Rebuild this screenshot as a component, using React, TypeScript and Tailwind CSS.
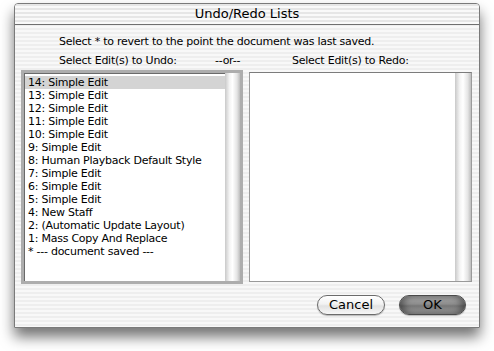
import React from "react";

const undoItems = [
  "14: Simple Edit",
  "13: Simple Edit",
  "12: Simple Edit",
  "11: Simple Edit",
  "10: Simple Edit",
  "9: Simple Edit",
  "8: Human Playback Default Style",
  "7: Simple Edit",
  "6: Simple Edit",
  "5: Simple Edit",
  "4: New Staff",
  "2: (Automatic Update Layout)",
  "1: Mass Copy And Replace",
  "* --- document saved ---",
];

const font = { fontFamily: '"DejaVu Sans", "Lucida Grande", sans-serif' };

export default function App() {
  return (
    <div className="w-[494px] h-[351px] bg-white pl-[14px] pt-[3px]" style={font}>
      <div className="w-[466px] h-[325px] flex flex-col border border-[#7a7a7a] rounded-t-[4px] overflow-hidden shadow-[0_9px_14px_rgba(0,0,0,0.55)] bg-[repeating-linear-gradient(180deg,#eeeeee_0px,#eeeeee_2px,#f8f8f8_2px,#f8f8f8_4px)]">
        <div className="h-[21px] shrink-0 flex items-center justify-center border-b border-[#6f6f6f] bg-[repeating-linear-gradient(180deg,#e6e6e6_0px,#e6e6e6_2px,#f9f9f9_2px,#f9f9f9_4px)] text-[13px] text-black">
          Undo/Redo Lists
        </div>
        <div className="pt-[10px] pl-[44px] text-[11px] leading-[13px] tracking-[-0.25px] text-black">
          Select * to revert to the point the document was last saved.
        </div>
        <div className="pt-[6px] flex text-[11px] leading-[13px] tracking-[-0.25px] text-black">
          <span className="pl-[44px] w-[200px]">Select Edit(s) to Undo:</span>
          <span className="w-[77px]">--or--</span>
          <span>Select Edit(s) to Redo:</span>
        </div>
        <div className="flex pl-[6px] pt-[3px] gap-[6px]">
          <div className="w-[222px] h-[214px] border-[3px] border-[#adadad] shadow-[inset_1px_1px_0_#6a6a6a] bg-white flex">
            <div className="flex-1 pt-[3px] pl-[1px]">
              {undoItems.map((t, i) => (
                <div
                  key={i}
                  className={
                    "h-[13px] leading-[13px] text-[11px] tracking-[-0.25px] pl-[3px] text-black whitespace-nowrap " +
                    (i === 0 ? "bg-[#d4d4d4]" : "")
                  }
                >
                  {t}
                </div>
              ))}
            </div>
            <div className="w-[15px] bg-[linear-gradient(90deg,#c9c9c9,#f4f4f4_30%,#ffffff_50%,#e4e4e4_80%,#bdbdbd)]" />
          </div>
          <div className="mt-[2px] w-[223px] h-[210px] border border-[#9a9a9a] border-t-[#7c7c7c] bg-white flex">
            <div className="flex-1" />
            <div className="w-[16px] bg-[linear-gradient(90deg,#c9c9c9,#f4f4f4_30%,#ffffff_50%,#e4e4e4_80%,#bdbdbd)]" />
          </div>
        </div>
        <div className="flex justify-end pr-[13px] pt-[11px] gap-[14px]">
          <button className="w-[68px] h-[20px] rounded-full border border-[#6b6b6b] bg-[linear-gradient(180deg,#ffffff_0%,#f2f2f2_45%,#e2e2e2_55%,#f6f6f6_100%)] shadow-[0_1px_1px_rgba(0,0,0,0.25)] text-[13px] leading-[18px] text-black">
            Cancel
          </button>
          <button className="w-[67px] h-[20px] rounded-full border border-[#4a4a4a] bg-[linear-gradient(180deg,#b4b4b4_0%,#8c8c8c_45%,#767676_55%,#a8a8a8_100%)] shadow-[inset_4px_0_6px_rgba(0,0,0,0.35),inset_-4px_0_6px_rgba(0,0,0,0.35),0_1px_1px_rgba(0,0,0,0.25)] text-[13px] leading-[18px] text-black">
            OK
          </button>
        </div>
      </div>
    </div>
  );
}
